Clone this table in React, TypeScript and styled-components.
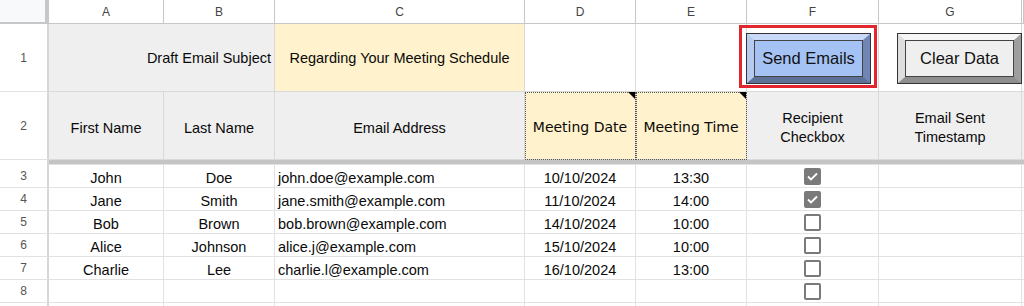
import * as React from 'react';
import styled, {createGlobalStyle} from 'styled-components';

const GlobalStyle = createGlobalStyle`
	html, body {
		margin: 0;
		padding: 0;
		background: #fff;
		overflow: hidden;
	}
	body {
		font-family: "Liberation Sans", Arial, sans-serif;
	}
`;

const Sheet = styled.div`
	position: relative;
	width: 1024px;
	height: 306px;
	overflow: hidden;
	display: grid;
	grid-template-columns: 49px 115px 111px 250px 111px 111px 132px 143px 2px;
	grid-template-rows: 24px 68px 68px 5px repeat(7, 23px);
`;

const Corner = styled.div`
	box-sizing: border-box;
	background: #f8f9fa;
	border-right: 4px solid #c7c7c7;
	border-bottom: 2px solid #c7c7c7;
`;

const ColHeader = styled.div`
	box-sizing: border-box;
	display: flex;
	align-items: center;
	justify-content: center;
	background: #fff;
	border-right: 1px solid #c7c7c7;
	border-bottom: 1px solid #c7c7c7;
	font-size: 12px;
	color: #444;
`;

const RowNum = styled.div`
	box-sizing: border-box;
	display: flex;
	align-items: center;
	justify-content: center;
	background: #fff;
	border-right: 2px solid #d6d6d6;
	border-bottom: 1px solid #e2e2e2;
	font-size: 12px;
	color: #555;
`;

type Align = 'left' | 'center' | 'right';

const Cell = styled.div<{$bg?: string; $align?: Align; $span?: number; $line?: string}>`
	box-sizing: border-box;
	grid-column: span ${p => p.$span || 1};
	display: flex;
	align-items: center;
	justify-content: ${p => (p.$align === 'left' ? 'flex-start' : p.$align === 'right' ? 'flex-end' : 'center')};
	padding: 0 3px;
	background: ${p => p.$bg || '#fff'};
	border-right: 1px solid ${p => p.$line || '#e2e2e2'};
	border-bottom: 1px solid ${p => p.$line || '#e2e2e2'};
	font-size: 14.5px;
	line-height: 19px;
	color: #0a0a0a;
	text-align: center;
	white-space: nowrap;
	overflow: hidden;
`;

const TitleCell = styled(Cell)`
	padding-top: 2px;
`;

const HeadCell = styled(Cell)`
	white-space: normal;
	padding-top: 5px;
`;

const NoteCell = styled(Cell)`
	position: relative;
	overflow: visible;
	outline: 1px dotted #555;
	outline-offset: -1px;
	font-family: "DejaVu Sans", Verdana, sans-serif;
	font-size: 14px;
	padding-top: 3px;

	&::after {
		content: '';
		position: absolute;
		top: 0;
		right: 0;
		border-top: 7px solid #000;
		border-left: 7px solid transparent;
	}
`;

const DataCell = styled(Cell)`
	padding-top: 5px;
`;

const Freeze = styled.div`
	box-sizing: border-box;
	grid-column: 2 / -1;
	background: #c4c4c4;
	border-bottom: 1px solid #e2e2e2;
`;

const FreezeGap = styled.div`
	border-right: 2px solid #d6d6d6;
`;

const Box = styled.span<{$checked?: boolean}>`
	box-sizing: border-box;
	width: 17px;
	height: 17px;
	border-radius: 2px;
	border: 2px solid #7a7a7a;
	background: ${p => (p.$checked ? '#7a7a7a' : '#fff')};
	display: flex;
	align-items: center;
	justify-content: center;
`;

const Drawings = styled.div`
	position: absolute;
	inset: 0;
	pointer-events: none;
`;

const Selection = styled.div`
	position: absolute;
	left: 739px;
	top: 25px;
	width: 138px;
	height: 63px;
	box-sizing: border-box;
	border: 3px solid #e3262d;
	padding: 5px 3px 1px 4px;
	display: flex;
`;

const Floating = styled.div`
	position: absolute;
	left: 897px;
	top: 33px;
	display: flex;
`;

const Bevel = styled.div<{$face: string; $top: string; $left: string; $right: string; $bottom: string}>`
	box-sizing: border-box;
	width: 125px;
	height: 51px;
	border: 1px solid #333;
	display: flex;

	& > div {
		box-sizing: border-box;
		flex: 1;
		display: flex;
		border-style: solid;
		border-width: 6px 7px 6px 7px;
		border-color: ${p => p.$top} ${p => p.$right} ${p => p.$bottom} ${p => p.$left};
	}

	& span {
		flex: 1;
		display: flex;
		align-items: center;
		justify-content: center;
		background: ${p => p.$face};
		border: 1px solid #444;
		font-size: 16.5px;
		color: #111;
	}
`;

const Check = () => (
	<svg width="11" height="9" viewBox="0 0 11 9">
		<path d="M1 4.5 L4 7.5 L10 1.5" fill="none" stroke="#fff" strokeWidth="1.8" />
	</svg>
);

const columns = ['A', 'B', 'C', 'D', 'E', 'F', 'G'];

const rows = [
	{first: 'John', last: 'Doe', email: 'john.doe@example.com', date: '10/10/2024', time: '13:30', checked: true},
	{first: 'Jane', last: 'Smith', email: 'jane.smith@example.com', date: '11/10/2024', time: '14:00', checked: true},
	{first: 'Bob', last: 'Brown', email: 'bob.brown@example.com', date: '14/10/2024', time: '10:00', checked: false},
	{first: 'Alice', last: 'Johnson', email: 'alice.j@example.com', date: '15/10/2024', time: '10:00', checked: false},
	{first: 'Charlie', last: 'Lee', email: 'charlie.l@example.com', date: '16/10/2024', time: '13:00', checked: false},
	{first: '', last: '', email: '', date: '', time: '', checked: false}
];

const GRAY = '#efefef';
const YELLOW = '#fff2cc';
const HEAD_LINE = '#d9d9d9';

export default function App() {
	return (
		<>
			<GlobalStyle />
			<Sheet>
				<Corner />
				{columns.map(c => <ColHeader key={c}>{c}</ColHeader>)}
				<ColHeader />

				<RowNum>1</RowNum>
				<TitleCell $span={2} $align="right" $bg={GRAY} $line={HEAD_LINE}>Draft Email Subject</TitleCell>
				<TitleCell $bg={YELLOW} $line={HEAD_LINE}>Regarding Your Meeting Schedule</TitleCell>
				<Cell $line={HEAD_LINE} />
				<Cell $line={HEAD_LINE} />
				<Cell $line={HEAD_LINE} />
				<Cell $line={HEAD_LINE} />
				<Cell $line={HEAD_LINE} />

				<RowNum>2</RowNum>
				<HeadCell $bg={GRAY} $line={HEAD_LINE}>First Name</HeadCell>
				<HeadCell $bg={GRAY} $line={HEAD_LINE}>Last Name</HeadCell>
				<HeadCell $bg={GRAY} $line={HEAD_LINE}>Email Address</HeadCell>
				<NoteCell $bg={YELLOW} $line={HEAD_LINE}>Meeting Date</NoteCell>
				<NoteCell $bg={YELLOW} $line={HEAD_LINE}>Meeting Time</NoteCell>
				<HeadCell $bg={GRAY} $line={HEAD_LINE}>Recipient<br />Checkbox</HeadCell>
				<HeadCell $bg={GRAY} $line={HEAD_LINE}>Email Sent<br />Timestamp</HeadCell>
				<HeadCell $bg={GRAY} $line={HEAD_LINE} />

				<FreezeGap />
				<Freeze />

				{rows.map((r, i) => (
					<React.Fragment key={i}>
						<RowNum>{i + 3}</RowNum>
						<DataCell>{r.first}</DataCell>
						<DataCell>{r.last}</DataCell>
						<DataCell $align="left">{r.email}</DataCell>
						<DataCell>{r.date}</DataCell>
						<DataCell>{r.time}</DataCell>
						<Cell>
							<Box $checked={r.checked}>{r.checked && <Check />}</Box>
						</Cell>
						<Cell />
						<Cell />
					</React.Fragment>
				))}
				<RowNum />
				<Cell /><Cell /><Cell /><Cell /><Cell /><Cell /><Cell /><Cell />
			</Sheet>
			<Drawings>
				<Selection>
					<Bevel $face="#a4c2f4" $top="#c9daf8" $left="#b7cbee" $right="#6f86b4" $bottom="#5d7098">
						<div><span>Send Emails</span></div>
					</Bevel>
				</Selection>
				<Floating>
					<Bevel $face="#efefef" $top="#f6f6f6" $left="#dedede" $right="#9e9e9e" $bottom="#8e8e8e">
						<div><span>Clear Data</span></div>
					</Bevel>
				</Floating>
			</Drawings>
		</>
	);
}
